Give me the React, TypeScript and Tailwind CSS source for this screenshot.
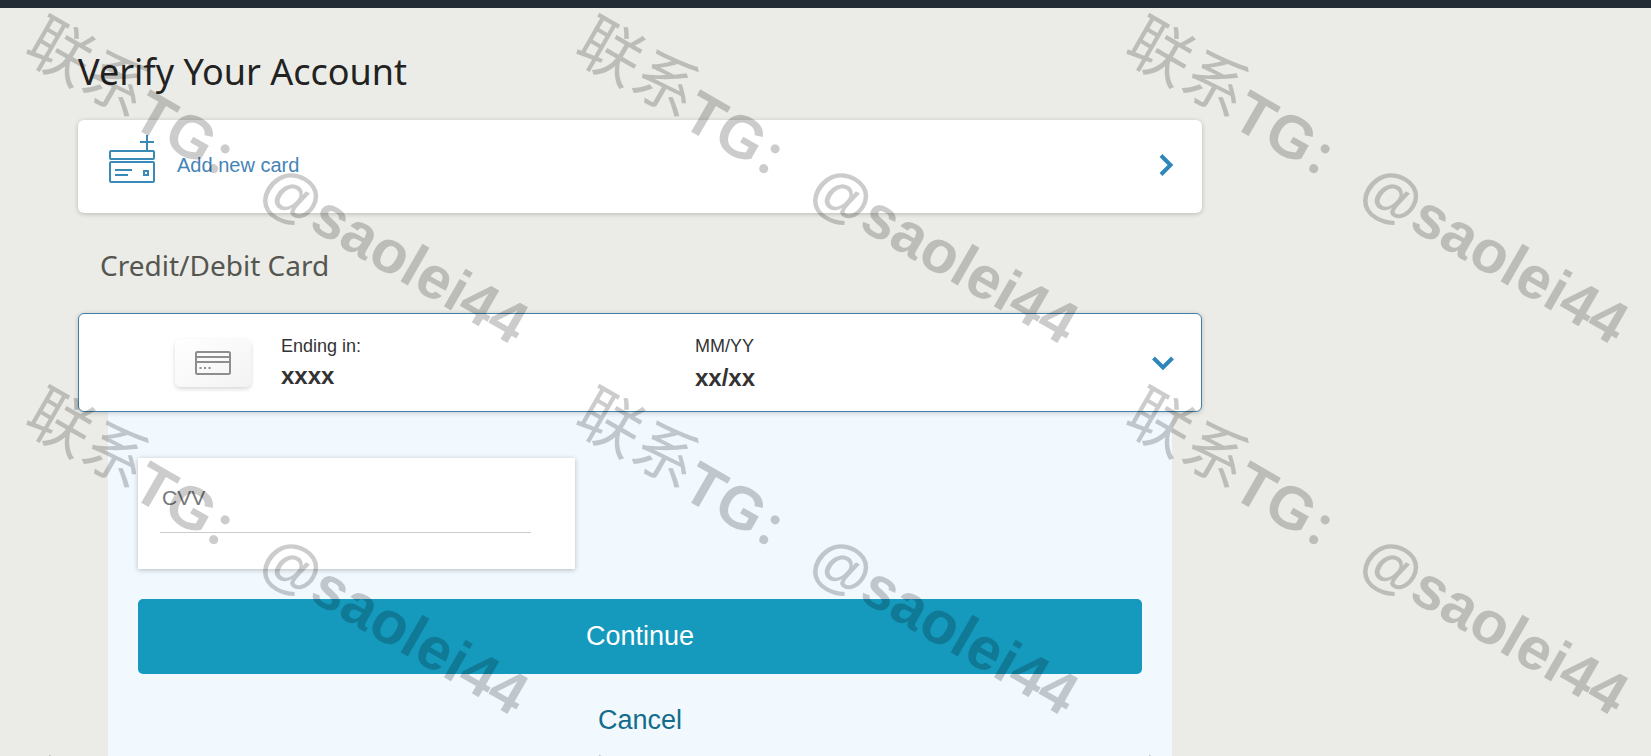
import { clsx } from "clsx";
import React from "react";

const Watermark = () => {
  return (
    <div
      aria-hidden="true"
      className="pointer-events-none absolute inset-0 overflow-hidden select-none"
    >
      <div className="grid grid-cols-[repeat(3,550px)] auto-rows-[371px]">
        {Array.from({ length: 9 }).map((_, i) => (
          <div key={i} className="flex items-center justify-center">
            <span className="flex rotate-30 items-center whitespace-nowrap text-[60px] leading-none font-bold text-black/20 font-['Liberation_Sans','Noto_Sans_CJK_SC',sans-serif]">
              <span className="pb-4 text-[64px] leading-none font-normal">联系</span>
              <span>
                TG<span className="mr-4 text-[48px]">：</span>@saolei44
              </span>
            </span>
          </div>
        ))}
      </div>
    </div>
  );
};

const AddCardIcon = () => (
  <svg width="46" height="50" viewBox="0 0 46 50" fill="none" stroke="#3a8ab8" strokeWidth="2">
    <path d="M38 1v15M31 8h14" />
    <rect x="1" y="17" width="44" height="8" rx="1" />
    <rect x="1" y="28" width="44" height="20" rx="1" />
    <path d="M6 36h17M6 41h13" />
    <rect x="35" y="37" width="4" height="4" />
  </svg>
);

const CardIcon = () => (
  <svg width="36" height="24" viewBox="0 0 36 24" fill="none" stroke="#8e8e8e">
    <rect x="1" y="1" width="34" height="22" rx="1.5" strokeWidth="2" />
    <path d="M1 6h34M1 11h34" strokeWidth="2" />
    <path d="M4.5 17h2M9 17h2M13.5 17h2" strokeWidth="2" />
  </svg>
);

const Chevron = ({ down }: { down?: boolean }) => (
  <svg
    width="24"
    height="24"
    viewBox="0 0 24 24"
    fill="none"
    stroke="#2e86bb"
    strokeWidth="4"
    className={clsx("shrink-0", down && "rotate-90")}
  >
    <path d="M7 2.5l9.5 9.5L7 21.5" />
  </svg>
);

const App = () => {
  return (
    <div className="relative flex h-screen flex-col overflow-hidden bg-[#ebece7] font-['Liberation_Sans',Arial,sans-serif]">
      <header className="h-2 shrink-0 bg-[#232b35]" />
      <main className="ml-[78px] flex w-full max-w-[1124px] flex-1 flex-col">
        <h1 className="mt-10 text-[36px] leading-12 text-[#222] font-['Noto_Sans',sans-serif]">
          Verify Your Account
        </h1>

        <a
          href="#"
          className="mt-6 flex h-[93px] shrink-0 items-center rounded-md bg-white pr-6 pb-1 pl-[31px] shadow-[0_1px_5px_rgba(0,0,0,0.22)]"
        >
          <span className="pb-3">
            <AddCardIcon />
          </span>
          <span className="ml-[22px] flex-1 text-[20px] leading-6 text-[#4584b6]">
            Add new card
          </span>
          <Chevron />
        </a>

        <h2 className="mt-8 ml-[22px] text-[28px] leading-10 text-[#555650] font-['Noto_Sans',sans-serif]">
          Credit/Debit Card
        </h2>

        <section className="relative mt-7 flex h-[99px] shrink-0 items-center rounded-md border border-[#3f7fa8] bg-white pr-[26px] pl-24 shadow-[0_1px_5px_rgba(0,0,0,0.2)]">
          <div className="flex h-12 w-[76px] items-center justify-center rounded-md bg-linear-to-br from-white to-[#f3f3f3] shadow-[0_2px_4px_rgba(0,0,0,0.16)]">
            <CardIcon />
          </div>
          <dl className="ml-[30px] grid flex-1 grid-cols-2 pt-0.5 pr-[42px] text-[#333]">
            <div>
              <dt className="text-[18px] leading-7">Ending in:</dt>
              <dd className="text-[24px] leading-8 font-bold">xxxx</dd>
            </div>
            <div>
              <dt className="text-[18px] leading-7">MM/YY</dt>
              <dd className="text-[24px] leading-9 font-bold">xx/xx</dd>
            </div>
          </dl>
          <button type="button" aria-label="Collapse">
            <Chevron down />
          </button>
        </section>

        <form
          className="mx-[30px] flex flex-1 flex-col bg-[#f1f9ff] px-[30px] pt-[46px]"
          onSubmit={(e) => e.preventDefault()}
        >
          <div className="h-[111px] w-[437px] bg-white pt-[6px] pl-[22px] shadow-[0_1px_5px_rgba(0,0,0,0.25)]">
            <input
              type="text"
              aria-label="CVV"
              placeholder="CVV"
              className="h-[69px] w-[371px] border-b border-[#ccc] px-[2px] text-[21px] outline-none placeholder:text-[#777]"
            />
          </div>
          <button
            type="submit"
            className="mt-[30px] h-[75px] w-full rounded-[5px] bg-[#1599bc] text-[27px] text-white"
          >
            Continue
          </button>
          <button type="button" className="mt-6 h-[44px] w-full text-[27px] text-[#146c8c]">
            Cancel
          </button>
        </form>
      </main>
      <Watermark />
    </div>
  );
};

export default App;
